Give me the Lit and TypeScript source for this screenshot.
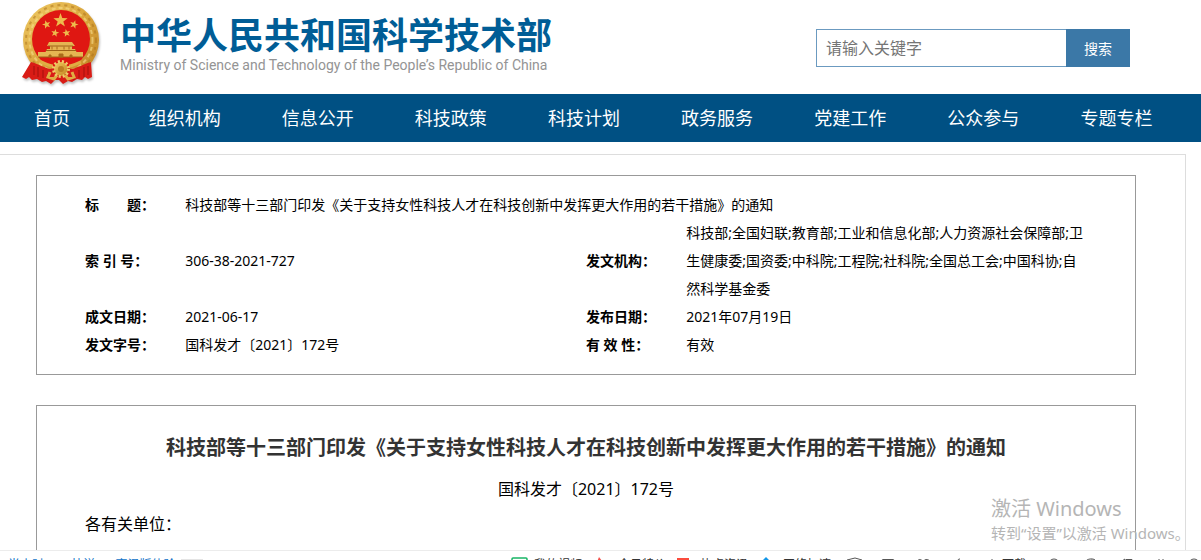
import { LitElement, html, svg, css } from "lit";
import { customElement } from "lit/decorators.js";

const star = (cx: number, cy: number, r: number, turn = 0) => {
  const pts: string[] = [];
  for (let i = 0; i < 10; i++) {
    const rad = i % 2 ? r * 0.4 : r;
    const a = -Math.PI / 2 + turn + (i * Math.PI) / 5;
    pts.push(`${(cx + rad * Math.cos(a)).toFixed(2)},${(cy + rad * Math.sin(a)).toFixed(2)}`);
  }
  return svg`<polygon points=${pts.join(" ")} fill="#eebb4c"/>`;
};

@customElement("state-emblem")
class StateEmblem extends LitElement {
  static styles = css`
    :host { display: block; flex: none; width: 80px; height: 86px; }
    svg { display: block; filter: drop-shadow(1px 2px 1px rgba(0, 0, 0, 0.25)); }
  `;
  render() {
    return html`<svg viewBox="0 0 80 86" width="80" height="86" role="img" aria-label="国徽">
      <defs>
        <linearGradient id="gold" x1="0" y1="0" x2="1" y2="1">
          <stop offset="0" stop-color="#f0cd68"/><stop offset=".5" stop-color="#dba63c"/><stop offset="1" stop-color="#c08424"/>
        </linearGradient>
      </defs>
      <ellipse cx="40" cy="39" rx="38" ry="38" fill="url(#gold)"/>
      <ellipse cx="40" cy="39" rx="35" ry="35" fill="none" stroke="#a8701c" stroke-width="2" stroke-dasharray="3 4" opacity=".5"/>
      <ellipse cx="40" cy="39" rx="31.500" ry="32" fill="none" stroke="#f7de8c" stroke-width="2" stroke-dasharray="4 3" opacity=".6"/>
      <circle cx="40" cy="38" r="29" fill="#df1712"/>
      ${star(39.5, 19.5, 7.5)} ${star(25.5, 23.5, 4.5, -0.3)} ${star(53, 23.5, 4.5, 0.3)}
      ${star(34, 32, 4.2, 0.2)} ${star(45.5, 32, 4.2, -0.2)}
      <path d="M28 41h23l3 4H26zM29 45h22v3H29zM26 48h28l2 4H24zM17 51h45v5H17z" fill="#e5b552"/>
      <path d="M27 45h25M25 49.500h30M17 56h45" stroke="#9c6218" stroke-width="1"/>
      <path d="M31 45.500v3M36 45.500v3M43 45.500v3M48 45.500v3M38 53h4v3h-4zM28 54h2v2h-2zM49 54h2v2h-2z" fill="#a96b1b" stroke="#a96b1b" stroke-width="1"/>
      <path d="M10 61c7 2 14 6 19 7l8-2h6l8 2c5-1 12-5 19-7l1 15-4 2-3-2-3 3-5-1-5 3-4-1-5 3-4-4h-4l-4 4-5-3-4 1-5-3-5 1-3-3-3 2-4-2z" fill="#d91c16"/>
      <path d="M13 65v9M17 66v10M22 69v8M27 72v7M53 72v7M58 69v8M63 66v10M67 65v9" stroke="#a3110d" stroke-width="1"/>
      <path d="M20 61c5 2 9 4 12 4M60 61c-5 2-9 4-12 4M29 71l-2 5 6 2 3-4M51 71l2 5-6 2-3-4" stroke="#e0ad43" stroke-width="3" fill="none"/>
      <circle cx="40" cy="68" r="7" fill="url(#gold)"/>
      <circle cx="40" cy="68" r="7.500" fill="none" stroke="#f0cd68" stroke-width="3" stroke-dasharray="2 2"/>
      <circle cx="40" cy="68" r="3" fill="#bd7f22"/>
    </svg>`;
  }
}

@customElement("browser-status")
class BrowserStatus extends LitElement {
  static styles = css`
    :host { display: block; height: 9px; overflow: hidden; border-top: 1px solid #ececec; background: #fff; }
    .bar { display: flex; align-items: flex-start; justify-content: space-between; padding: 6px 0 0 8px; font-size: 12px; line-height: 16px; color: #333; white-space: nowrap; }
    .news { display: flex; gap: 5px; color: #1173c7; }
    .news a { color: inherit; text-decoration: none; }
    .more { width: 22px; height: 16px; margin-top: 2px; background: #e4e4e4; }
    .side { display: grid; grid-template-columns: 84px 82px 83px 86px 35px 35px 38px 34px 60px repeat(4, 35px) 13px; }
    .item { display: flex; gap: 5px; }
    svg { flex: none; width: 18px; height: 18px; fill: none; stroke: #555; stroke-width: 1; }
    .slim { width: 9px; }
  `;
  render() {
    return html`<div class="bar">
      <div class="news"><a href="#">半小时2000快送YJ2 高温版体验</a><span class="more"></span></div>
      <div class="side">
        <span class="item"><svg viewBox="0 0 18 18"><rect x="1" y="1" width="15" height="14" rx="1" stroke="#18b566" stroke-width="1.500"/></svg>我的视频</span>
        <span class="item"><svg viewBox="0 0 18 18"><path d="M4 0l3 4 4 6H0z" fill="#f4504a" stroke="none"/></svg>今日特价</span>
        <span class="item"><svg viewBox="0 0 18 18"><path d="M0 1h12v12H0z" fill="#fb4c3d" stroke="none"/></svg>热点资讯</span>
        <span class="item"><svg viewBox="0 0 18 18"><path d="M6 0l3 3 3 5H0l3-5z" fill="#1296e8" stroke="none"/></svg>网络加速</span>
        <span><svg viewBox="0 0 18 18"><path d="M1 4V3l8-2 7 2v6l-7 7-8-7z"/></svg></span>
        <span><svg viewBox="0 0 18 18"><rect x="1" y="2.500" width="12" height="10" rx="1"/></svg></span>
        <span><svg viewBox="0 0 18 18"><path d="M7 5C5 1 1 2 1 6c0 3 6 8 6 8s7-5 7-8c0-4-5-5-7-1z"/></svg></span>
        <span><svg viewBox="0 0 18 18"><path d="M6 2C3 2 3 5 3 7v7"/></svg></span>
        <span class="item"><svg class="slim" viewBox="0 0 9 18"><path d="M4 2v10M1 9l3 4 4-4"/></svg>下载</span>
        <span><svg viewBox="0 0 18 18"><circle cx="6" cy="7.500" r="5.500"/></svg></span>
        <span><svg viewBox="0 0 18 18"><path d="M1 9C1 1 10 1 12 3M4 9c0-6 5-7 8-5"/></svg></span>
        <span><svg viewBox="0 0 18 18"><path d="M1 4h3l3-2v10M8 2.500h6v9H8"/></svg></span>
        <span><svg viewBox="0 0 18 18"><path d="M6 2v10M4 4h4M10 2v2l3 2"/></svg></span>
        <span><svg viewBox="0 0 18 18"><circle cx="6" cy="7.500" r="5.500"/></svg></span>
      </div>
    </div>`;
  }
}

@customElement("app-root")
class AppRoot extends LitElement {
  static styles = css`
    :host { display: flex; flex-direction: column; height: 100vh; overflow: hidden; position: relative; background: #fff; color: #000; font-family: "Noto Sans", "Noto Sans CJK SC", sans-serif; font-size: 14px; }
    .top { display: flex; flex: none; align-items: center; justify-content: space-between; box-sizing: border-box; height: 94px; padding: 2px 71px 0 21px; }
    .brand { display: flex; align-items: center; gap: 19px; padding-bottom: 8px; }
    .name { margin: 0; font: 700 36px/40px "Noto Sans CJK SC", sans-serif; color: #005d96; white-space: nowrap; }
    .english { margin: 0; padding-top: 2px; font-family: Roboto, sans-serif; font-size: 14px; line-height: 20px; color: #949494; white-space: nowrap; }
    .search { display: flex; width: 314px; height: 38px; }
    .field { flex: 1; min-width: 0; box-sizing: border-box; padding: 0 9px; border: 1px solid #6b9ac0; border-right: 0; border-radius: 0; outline: 0; font: inherit; font-size: 16px; }
    .field::placeholder { color: #757575; opacity: 1; }
    .go { width: 64px; padding: 0; border: 0; background: #3b78a7; color: #fff; font: inherit; }
    .menu { display: flex; flex: none; height: 48px; background: #005083; font-size: 18px; line-height: 48px; }
    .menu a { flex: 133 0 0; text-align: center; color: #fff; text-decoration: none; white-space: nowrap; }
    .menu a:first-child { flex-grow: 104; margin-right: 14px; }
    .menu::after { content: ""; flex: 18 0 0; }
    .content { flex: 1; min-height: 0; margin: 12px 15px 0 0; padding: 20px 49px 0 36px; border: solid #ddd; border-width: 1px 1px 0 0; overflow: hidden; }
    .box { padding: 15px 48px; border: 1px solid #999; }
    .meta { width: 100%; table-layout: fixed; border-collapse: collapse; line-height: 28px; text-align: left; }
    .meta th, .meta td { padding: 0; }
    .key { width: 10%; }
    .value { width: 40%; }
    .meta th { white-space: pre; font-weight: 700; }
    .doc { margin-top: 30px; padding-bottom: 60px; }
    .title { margin: 11px 0; font-size: 20px; line-height: 32px; text-align: center; color: #333; }
    .number { margin: 0; font-size: 16px; line-height: 28px; text-align: center; }
    .para { margin: 7px 0 0; font-size: 16px; line-height: 28px; }
    .activate { position: absolute; right: 9px; bottom: 17px; width: 201px; color: #b5b5b5; font-size: 15px; line-height: 20px; white-space: nowrap; pointer-events: none; }
    .activate strong { display: block; font-size: 20px; font-weight: 400; line-height: 28px; }
  `;
  private menu = ["首页", "组织机构", "信息公开", "科技政策", "科技计划", "政务服务", "党建工作", "公众参与", "专题专栏"];
  render() {
    return html`
      <header class="top">
        <div class="brand">
          <state-emblem></state-emblem>
          <div>
            <h1 class="name">中华人民共和国科学技术部</h1>
            <p class="english">Ministry of Science and Technology of the People’s Republic of China</p>
          </div>
        </div>
        <form class="search" @submit=${(e: Event) => e.preventDefault()}>
          <input class="field" type="text" aria-label="关键字" placeholder="请输入关键字">
          <button class="go">搜索</button>
        </form>
      </header>
      <nav class="menu">${this.menu.map((m) => html`<a href="#">${m}</a>`)}</nav>
      <main class="content">
        <section class="box">
          <table class="meta">
            <colgroup><col class="key"><col class="value"><col class="key"><col class="value"></colgroup>
            <tr><th scope="row">标　　题：</th><td colspan="3">科技部等十三部门印发《关于支持女性科技人才在科技创新中发挥更大作用的若干措施》的通知</td></tr>
            <tr><th scope="row">索 引 号：</th><td>306-38-2021-727</td><th scope="row">发文机构：</th><td>科技部;全国妇联;教育部;工业和信息化部;人力资源社会保障部;卫生健康委;国资委;中科院;工程院;社科院;全国总工会;中国科协;自然科学基金委</td></tr>
            <tr><th scope="row">成文日期：</th><td>2021-06-17</td><th scope="row">发布日期：</th><td>2021年07月19日</td></tr>
            <tr><th scope="row">发文字号：</th><td>国科发才〔2021〕172号</td><th scope="row">有 效 性：</th><td>有效</td></tr>
          </table>
        </section>
        <article class="box doc">
          <h2 class="title">科技部等十三部门印发《关于支持女性科技人才在科技创新中发挥更大作用的若干措施》的通知</h2>
          <p class="number">国科发才〔2021〕172号</p>
          <p class="para">各有关单位：</p>
        </article>
      </main>
      <browser-status></browser-status>
      <aside class="activate"><strong>激活 Windows</strong>转到“设置”以激活 Windows。</aside>
    `;
  }
}
